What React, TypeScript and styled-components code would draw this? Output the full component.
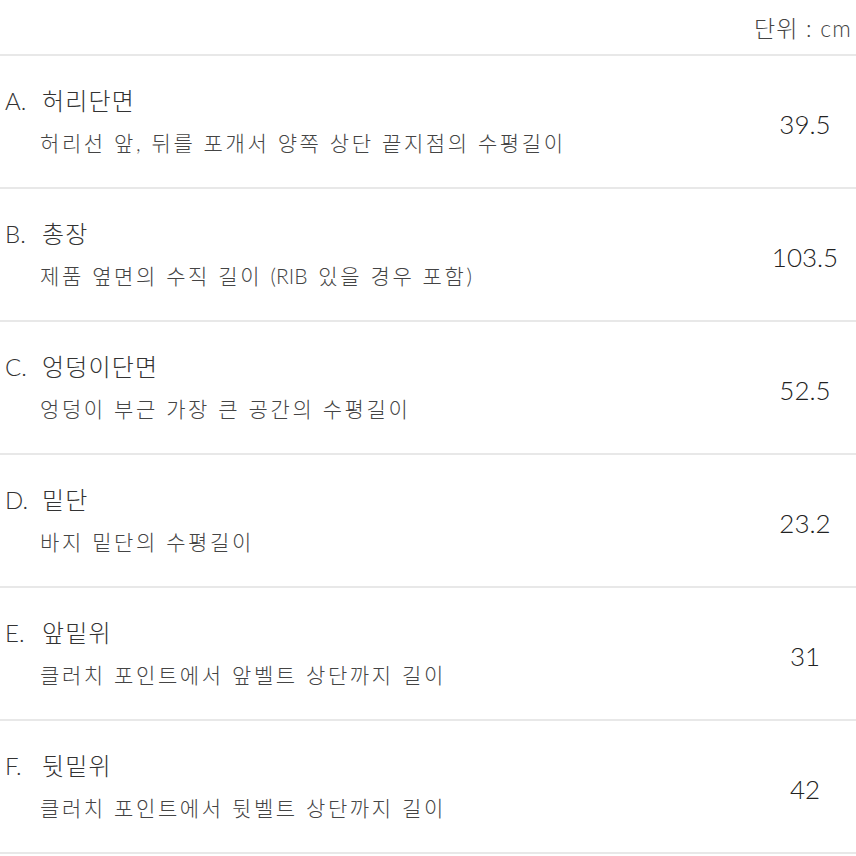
import styled, { createGlobalStyle } from 'styled-components';

const GlobalStyle = createGlobalStyle`
  body {
    margin: 0;
    background: #fff;
    font-family: Lato, 'Noto Sans CJK KR', sans-serif;
  }
`;

const SizeTable = styled.div`
  width: 856px;
  color: #333;
`;

const UnitBar = styled.div`
  height: 54px;
  display: flex;
  align-items: center;
  justify-content: flex-end;
  padding-right: 4px;
  font-size: 23px;
  letter-spacing: 1.2px;
  color: #444;
  font-weight: 300;
`;

const Row = styled.div<{ $last?: boolean }>`
  display: flex;
  align-items: center;
  height: 131px;
  border-top: 2px solid #e8e8e8;
  border-bottom: ${(p) => (p.$last ? '2px solid #e8e8e8' : 'none')};
`;

const Info = styled.div`
  flex: 1;
  display: flex;
  flex-direction: column;
  gap: 6px;
`;

const Title = styled.div`
  display: flex;
  padding-left: 5px;
  font-size: 24px;
  line-height: 36px;
  color: #333;
`;

const Letter = styled.span`
  width: 37px;
  font-weight: 300;
`;

const Name = styled.span`
  font-weight: 300;
  letter-spacing: 1.2px;
`;

const Desc = styled.div`
  padding-left: 40px;
  font-size: 21px;
  line-height: 36px;
  letter-spacing: 2.6px;
  color: #444;
  font-weight: 300;
`;

const Latin = styled.span`
  letter-spacing: 0;
  margin-right: 2.6px;
`;

const Value = styled.div`
  width: 102px;
  text-align: center;
  font-size: 26px;
  font-weight: 300;
  color: #222;
  padding-top: 4px;
`;

const rows = [
  { letter: 'A.', name: '허리단면', desc: ['허리선 앞, 뒤를 포개서 양쪽 상단 끝지점의 수평길이'], value: '39.5' },
  { letter: 'B.', name: '총장', desc: ['제품 옆면의 수직 길이 ', '(RIB', ' 있을 경우 포함', ')'], value: '103.5' },
  { letter: 'C.', name: '엉덩이단면', desc: ['엉덩이 부근 가장 큰 공간의 수평길이'], value: '52.5' },
  { letter: 'D.', name: '밑단', desc: ['바지 밑단의 수평길이'], value: '23.2' },
  { letter: 'E.', name: '앞밑위', desc: ['클러치 포인트에서 앞벨트 상단까지 길이'], value: '31' },
  { letter: 'F.', name: '뒷밑위', desc: ['클러치 포인트에서 뒷벨트 상단까지 길이'], value: '42' },
];

export default function App() {
  return (
    <>
      <GlobalStyle />
      <SizeTable>
        <UnitBar>단위 : cm</UnitBar>
        {rows.map((r, i) => (
          <Row key={r.letter} $last={i === rows.length - 1}>
            <Info>
              <Title>
                <Letter>{r.letter}</Letter>
                <Name>{r.name}</Name>
              </Title>
              <Desc>
                {r.desc.map((part, j) =>
                  j % 2 === 1 ? <Latin key={j}>{part}</Latin> : <span key={j}>{part}</span>
                )}
              </Desc>
            </Info>
            <Value>{r.value}</Value>
          </Row>
        ))}
      </SizeTable>
    </>
  );
}
